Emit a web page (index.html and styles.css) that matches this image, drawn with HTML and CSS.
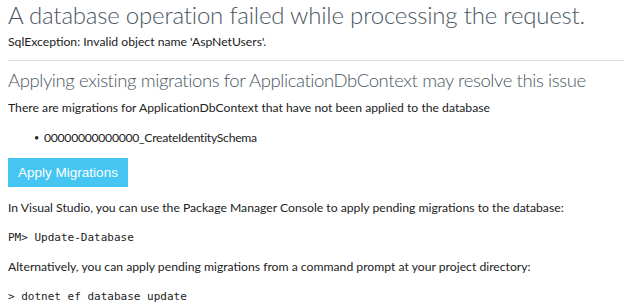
FILE: index.html
```html
<!DOCTYPE html>
<html lang="en">
<head>
<meta charset="utf-8">
<title>Internal Server Error</title>
<link rel="stylesheet" href="styles.css">
</head>
<body>
<h1 class="title">A database operation failed while processing the request.</h1>
<p class="exception">SqlException: Invalid object name 'AspNetUsers'.</p>
<hr class="rule">
<div class="section">
  <h2 class="subtitle">Applying existing migrations for ApplicationDbContext may resolve this issue</h2>
  <p class="text">There are migrations for ApplicationDbContext that have not been applied to the database</p>
  <ul class="migrations">
    <li>00000000000000_CreateIdentitySchema</li>
  </ul>
  <button class="apply" type="button">Apply Migrations</button>
  <p class="text after-button">In Visual Studio, you can use the Package Manager Console to apply pending migrations to the database:</p>
  <code class="cmd">PM&gt; Update-Database</code>
  <p class="text after-cmd">Alternatively, you can apply pending migrations from a command prompt at your project directory:</p>
  <code class="cmd">&gt; dotnet ef database update</code>
</div>
</body>
</html>
```
FILE: styles.css
```css
html, body {
  margin: 0;
  padding: 0;
  background: #fff;
}
body {
  padding: 0 0 0 8px;
  font-family: "Lato", "Open Sans", sans-serif;
  font-size: 12.2px;
  color: #222;
  overflow: hidden;
}
.title {
  margin: 0;
  font-size: 24px;
  line-height: 29px;
  font-weight: 300;
  letter-spacing: -0.2px;
  color: #4a5661;
  white-space: nowrap;
}
.exception {
  margin: 5px 0 0;
  line-height: 16px;
}
.rule {
  margin: 10px 0 0;
  border: 0;
  border-top: 1px solid #dcdcdc;
  height: 0;
}
.subtitle {
  margin: 7px 0 0;
  font-size: 18.5px;
  line-height: 24px;
  font-weight: 300;
  letter-spacing: -0.4px;
  color: #4a5661;
  white-space: nowrap;
}
.text {
  margin: 8px 0 0;
  line-height: 16px;
  white-space: nowrap;
}
.migrations {
  margin: 14px 0 0;
  padding: 0 0 0 37px;
  line-height: 16px;
  list-style: none;
}
.migrations li {
  letter-spacing: -0.28px;
}
.migrations li::before {
  content: "\2022";
  display: inline-block;
  width: 10px;
  margin-left: -11px;
  font-size: 9px;
  vertical-align: 1px;
}
.apply {
  display: block;
  margin-top: 12px;
  height: 29px;
  width: 120px;
  padding: 0;
  border: 0;
  background: #44c5f2;
  color: #fff;
  font-family: "Liberation Sans", Arial, sans-serif;
  font-size: 13.5px;
}
.after-button {
  margin-top: 13px;
}
.cmd {
  display: block;
  margin-top: 14px;
  font-family: "DejaVu Sans Mono", monospace;
  font-size: 11px;
  line-height: 16px;
  color: #222;
}
.after-cmd {
  margin-top: 13px;
}
```
